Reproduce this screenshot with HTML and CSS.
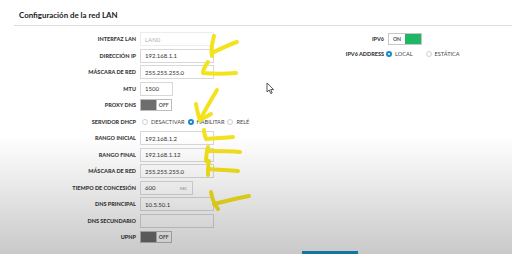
FILE: index.html
```html
<!DOCTYPE html>
<html lang="es">
<head>
    <meta charset="UTF-8">
    <meta name="viewport" content="width=device-width, initial-scale=1.0">
    <title>Configuración de la red LAN</title>
    <link rel="stylesheet" href="styles.css">
</head>
<body>
    <div class="page">
        <div class="title">Configuración de la red LAN</div>

        <div class="form">
            <div class="col col-left">
                <label>Interfaz LAN</label>
                <input type="text" class="field disabled" value="LAN0" disabled>

                <label>Dirección IP</label>
                <input type="text" class="field" value="192.168.1.1">

                <label>Máscara de red</label>
                <input type="text" class="field" value="255.255.255.0">

                <label>MTU</label>
                <input type="text" class="field short" value="1500">

                <label>Proxy DNS</label>
                <div class="toggle off"><span class="knob"></span><span class="state">OFF</span></div>

                <label>Servidor DHCP</label>
                <div class="radios">
                    <span class="radio"><span class="dot"></span>Desactivar</span>
                    <span class="radio"><span class="dot on"></span>Habilitar</span>
                    <span class="radio"><span class="dot"></span>Relé</span>
                </div>

                <label>Rango inicial</label>
                <input type="text" class="field" value="192.168.1.2">

                <label>Rango final</label>
                <input type="text" class="field" value="192.168.1.12">

                <label>Máscara de red</label>
                <input type="text" class="field" value="255.255.255.0">

                <label>Tiempo de concesión</label>
                <div class="field lease"><span>600</span><span class="unit">sec</span></div>

                <label>DNS principal</label>
                <input type="text" class="field" value="10.5.50.1">

                <label>DNS secundario</label>
                <input type="text" class="field" value="">

                <label>UPnP</label>
                <div class="toggle off"><span class="knob"></span><span class="state">OFF</span></div>
            </div>

            <div class="col col-right">
                <label>IPv6</label>
                <div class="toggle on"><span class="state">ON</span><span class="knob"></span></div>

                <label>IPv6 Address</label>
                <div class="radios wide">
                    <span class="radio"><span class="dot on"></span>Local</span>
                    <span class="radio"><span class="dot"></span>Estática</span>
                </div>
            </div>
        </div>

        <div class="actions">
            <button class="save" title="Guardar" aria-label="Guardar"></button>
        </div>
    </div>

    <!-- marcas amarillas dibujadas sobre la captura -->
    <svg class="marks" width="512" height="254" viewBox="0 0 512 254">
        <g fill="none" stroke="#f3e21c" stroke-width="4" stroke-linecap="round" stroke-linejoin="round">
            <path d="M214 36 C212 43 211 50 212 56"/>
            <path d="M212 53 C220 49 228 45 237 42"/>
            <path d="M208 62 C205 66 203 70 203 73 C213 74 224 74 236 73"/>
            <path d="M217 90 C211 100 205 110 200 120"/>
            <path d="M196 104 C197 110 198 115 200 120 L211 114"/>
            <path d="M204 130 C204 133 205 136 206 139 C215 138 224 138 233 137"/>
            <path d="M208 147 C207 151 206 156 206 161"/>
            <path d="M207 151 C218 151 229 151 240 152"/>
            <path d="M209 161 C208 165 208 169 208 175"/>
            <path d="M208 169 C218 170 228 170 238 171"/>
            <path d="M249 196 C238 198 226 201 214 204"/>
            <path d="M211 192 C212 198 214 204 218 209"/>
        </g>
    </svg>

    <div class="shade"></div>

    <svg class="cursor" width="9" height="13" viewBox="0 0 9 13">
        <path d="M1 1 L1 10 L3.2 8 L4.8 11.6 L6.2 11 L4.7 7.5 L7.6 7.5 Z" fill="#fff" stroke="#444" stroke-width="0.9" stroke-linejoin="round"/>
    </svg>
</body>
</html>
```

FILE: styles.css
```css
html, body {
    margin: 0;
    padding: 0;
    height: 254px;
    overflow: hidden;
}

body {
    font-family: Lato, "Open Sans", sans-serif;
    background-color: #fff;
    color: #333;
    position: relative;
}

.title {
    height: 25px;
    box-sizing: border-box;
    padding: 9px 0 0 19px;
    font-size: 7.9px;
    font-weight: 700;
    line-height: 13px;
    color: #222;
    position: relative;
}

.title::after {
    content: "";
    position: absolute;
    left: 14px;
    right: 0;
    bottom: -1px;
    border-bottom: 1px solid #dcdcdc;
}

.form {
    display: flex;
    padding-top: 6px;
}

.col {
    display: grid;
    align-items: center;
    column-gap: 4px;
}

.col-left {
    width: 260px;
    grid-template-columns: 136px auto;
    grid-auto-rows: 16.5px;
}

.col-right {
    grid-template-columns: 124px auto;
    grid-auto-rows: 15px;
    align-content: start;
}

.col label {
    text-align: right;
    text-transform: uppercase;
    font-size: 5.5px;
    font-weight: 900;
    color: #3a3a3a;
    white-space: nowrap;
}

.field {
    box-sizing: border-box;
    width: 74px;
    height: 14px;
    margin: 0;
    padding: 0 0 0 4px;
    border: 1px solid #d8d8d8;
    border-radius: 0;
    background-color: #fff;
    font-family: Lato, "Open Sans", sans-serif;
    font-size: 6px;
    color: #333;
    outline: none;
}

.field.short {
    width: 33px;
}

.field.disabled {
    border-color: #ececec;
    color: #b0b0b0;
}

.lease {
    width: 53px;
    display: flex;
    align-items: center;
    justify-content: space-between;
    padding-right: 5px;
}

.lease .unit {
    color: #aaa;
    font-size: 5px;
}

.toggle {
    display: flex;
    box-sizing: border-box;
    width: 32px;
    height: 12px;
    border: 1px solid #bdbdbd;
    background-color: #fff;
}

.toggle .knob {
    flex: 1;
}

.toggle .state {
    flex: 1;
    font-size: 5.2px;
    font-weight: 700;
    line-height: 10px;
    text-align: center;
    color: #555;
}

.toggle.off .knob {
    background-color: #6d6d6d;
}

.toggle.off .state {
    border-left: 1px solid #bdbdbd;
}

.toggle.on {
    width: 34px;
    border-color: #c6c6c6;
}

.toggle.on .knob {
    background-color: #1fb766;
}

.radios {
    display: flex;
    align-items: center;
    gap: 3px;
    margin-left: 2px;
}

.radios.wide {
    gap: 13px;
    margin-left: -2px;
}

.radio {
    display: flex;
    align-items: center;
    gap: 3px;
    font-size: 5.6px;
    text-transform: uppercase;
    color: #444;
}

.dot {
    box-sizing: border-box;
    width: 6px;
    height: 6px;
    border: 1px solid #cfcfcf;
    border-radius: 50%;
    background-color: #fff;
}

.dot.on {
    border: 2px solid #1688cc;
}

.actions {
    position: absolute;
    top: 251px;
    left: 302px;
}

.save {
    display: block;
    width: 56px;
    height: 3px;
    padding: 0;
    border: none;
    background-color: #1795cb;
}

.marks {
    position: absolute;
    top: 0;
    left: 0;
    pointer-events: none;
}

.shade {
    position: absolute;
    left: 0;
    right: 0;
    top: 135px;
    height: 119px;
    pointer-events: none;
    background: linear-gradient(to bottom, rgba(0, 0, 0, 0) 0%, rgba(0, 0, 0, 0.07) 35%, rgba(0, 0, 0, 0.16) 75%, rgba(0, 0, 0, 0.21) 100%);
}

.cursor {
    position: absolute;
    top: 82px;
    left: 266px;
    pointer-events: none;
}
```
